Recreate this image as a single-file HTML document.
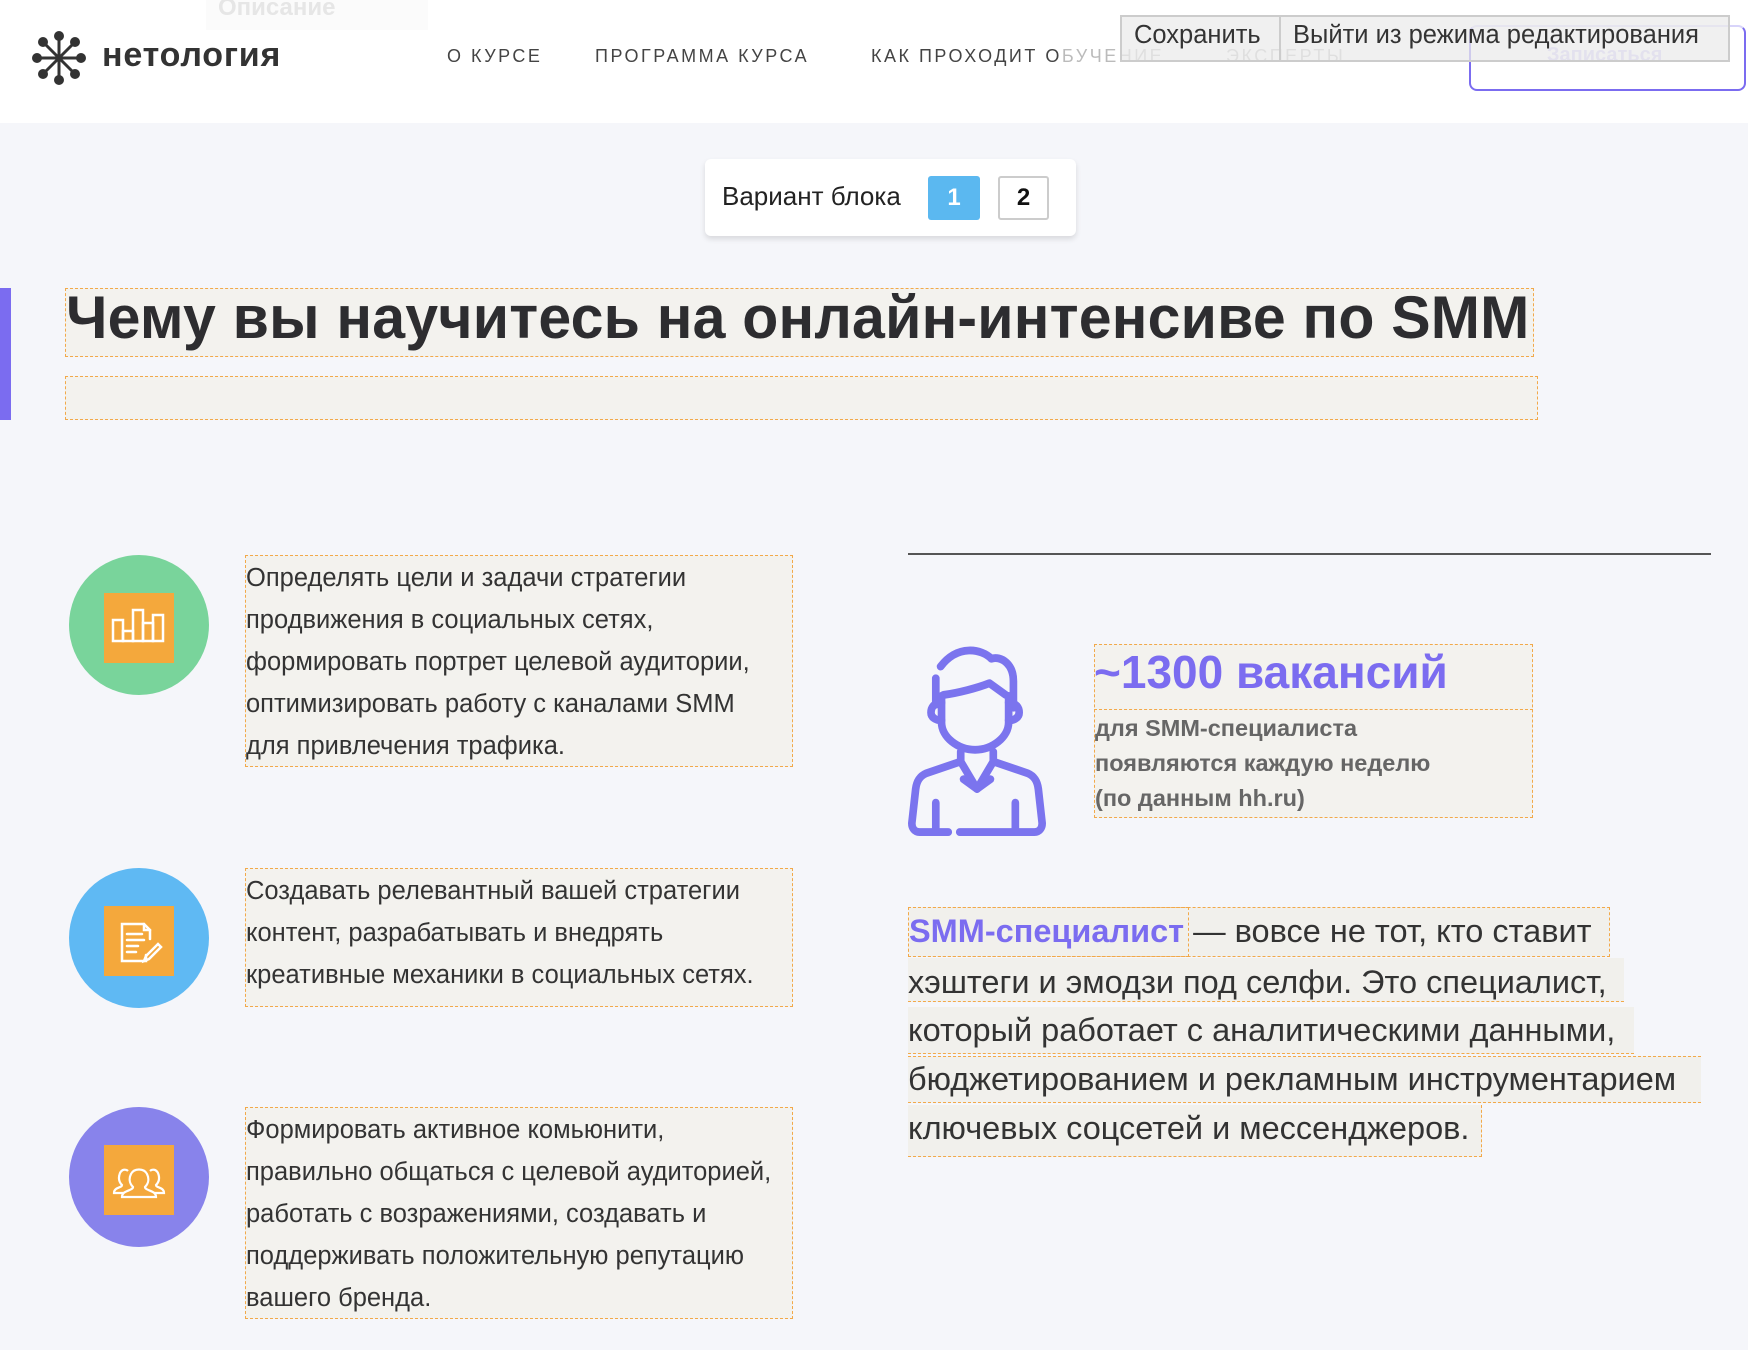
<!DOCTYPE html>
<html><head><meta charset="utf-8"><style>
*{margin:0;padding:0;box-sizing:border-box}
body{width:1748px;height:1350px;background:#f5f6fa;font-family:"Liberation Sans","Noto Sans CJK SC",sans-serif;position:relative;overflow:hidden;color:#333}
.abs{position:absolute}
.hdr{left:0;top:0;width:1748px;height:123px;background:#fff}
.nav{top:46px;font-size:18px;letter-spacing:2.5px;color:#444;white-space:nowrap}
.dot{border:1px dashed #f2a94a;background:#f3f2ee}
.tb{font-size:25.5px;line-height:42px;color:#333;padding:0 0 0 0;white-space:nowrap}
.circ{width:140px;height:140px;border-radius:50%;left:69px}
.sq{position:absolute;left:35px;top:38px;width:70px;height:70px;background:#f4a83c}
.pl{font-size:32.5px;line-height:49px;color:#333;white-space:nowrap}
</style></head><body>
<div class="abs hdr"></div>
<div class="abs" style="left:206px;top:0;width:222px;height:30px;background:#fbfbfb"></div>
<div class="abs" style="left:218px;top:-6px;font-size:24px;color:#e6e6e6;font-weight:bold">Описание</div>
<svg class="abs" style="left:31px;top:30px" width="56" height="56" viewBox="0 0 56 56">
<g stroke="#333" stroke-width="3"><line x1="28" y1="6" x2="28" y2="50"/><line x1="6" y1="28" x2="50" y2="28"/><line x1="12" y1="12" x2="44" y2="44"/><line x1="44" y1="12" x2="12" y2="44"/></g>
<g fill="#333"><circle cx="28" cy="6" r="5"/><circle cx="28" cy="50" r="5"/><circle cx="6" cy="28" r="5"/><circle cx="50" cy="28" r="5"/><circle cx="12" cy="12" r="5"/><circle cx="44" cy="44" r="5"/><circle cx="44" cy="12" r="5"/><circle cx="12" cy="44" r="5"/></g></svg>
<div class="abs" style="left:102px;top:36px;font-size:34px;color:#333;letter-spacing:0.8px;font-weight:bold;transform:scaleX(1.0);">нетология</div>
<div class="abs nav" style="left:447px">О КУРСЕ</div>
<div class="abs nav" style="left:595px">ПРОГРАММА КУРСА</div>
<div class="abs nav" style="left:871px">КАК ПРОХОДИТ О<span style="color:#bbb">БУЧЕНИЕ</span></div>
<div class="abs nav" style="left:1226px;color:#bbb">ЭКСПЕРТЫ</div>
<div class="abs" style="left:1469px;top:25px;width:277px;height:66px;border:2px solid #7b6cf0;border-top-color:#d8d4fa;border-radius:8px"></div>
<div class="abs" style="left:1547px;top:44px;font-size:20px;color:#c9c4f7;font-weight:bold">Записаться</div>
<div class="abs" style="left:1120px;top:15px;width:610px;height:47px;background:rgba(235,235,235,.75);border:2px solid #ccc"></div>
<div class="abs" style="left:1279px;top:15px;width:2px;height:47px;background:#ccc"></div>
<div class="abs" style="left:1134px;top:21px;font-size:25.5px;color:#333">Сохранить</div>
<div class="abs" style="left:1293px;top:21px;font-size:25.5px;color:#333">Выйти из режима редактирования</div>

<div class="abs" style="left:705px;top:159px;width:371px;height:77px;background:#fff;border-radius:6px;box-shadow:0 3px 6px rgba(0,0,0,.12)"></div>
<div class="abs" style="left:722px;top:181px;font-size:26px;color:#222">Вариант блока</div>
<div class="abs" style="left:928px;top:176px;width:52px;height:44px;background:#5bb8f0;border-radius:3px;color:#fff;font-size:24px;font-weight:bold;text-align:center;line-height:44px">1</div>
<div class="abs" style="left:998px;top:176px;width:51px;height:44px;background:#fff;border:2px solid #ccc;border-radius:3px;color:#111;font-size:24px;font-weight:bold;text-align:center;line-height:40px">2</div>

<div class="abs" style="left:0;top:288px;width:11px;height:132px;background:#7b6cf0"></div>
<div class="abs dot" style="left:65px;top:288px;width:1469px;height:69px"></div>
<div class="abs" style="left:66px;top:283px;font-size:60px;font-weight:bold;color:#2d2d30;white-space:nowrap;letter-spacing:0.2px;transform:scaleX(0.984);transform-origin:left">Чему вы научитесь на онлайн-интенсиве по SMM</div>
<div class="abs dot" style="left:65px;top:376px;width:1473px;height:44px"></div>

<div class="abs" style="left:908px;top:553px;width:803px;height:2px;background:#555"></div>

<div class="abs circ" style="top:555px;background:#79d49b"><div class="sq"><svg width="70" height="70" viewBox="0 0 70 70" fill="none" stroke="#fff" stroke-width="2.5"><rect x="9" y="27" width="10" height="21"/><rect x="19" y="38" width="10" height="10"/><rect x="29" y="17" width="10" height="31"/><rect x="39" y="30" width="10" height="18"/><rect x="49" y="22" width="10" height="26"/></svg></div></div>
<div class="abs circ" style="top:868px;background:#5fb9f3"><div class="sq"><svg width="70" height="70" viewBox="0 0 70 70" fill="none" stroke="#fff" stroke-width="2.5" stroke-linecap="round"><path d="M42 49V55H18V18H40L46 24V33"/><path d="M40 18V24H46"/><path d="M23 28H38M23 34H40M23 40H34M23 46H32"/><path d="M42 50L54 38L57 41L45 53L40 55Z"/></svg></div></div>
<div class="abs circ" style="top:1107px;background:#8883eb"><div class="sq"><svg width="70" height="70" viewBox="0 0 70 70" fill="none" stroke="#fff" stroke-width="2.2"><path d="M20 48H10C10 42 18 43 18 40C15 37 14 33 16 28C18 24 22 24 24 26"/><path d="M50 48H60C60 42 52 43 52 40C55 37 56 33 54 28C52 24 48 24 46 26"/><path d="M18 52C18 45 29 46 29 42C25 38 25 33 27 29C30 23 40 23 43 29C45 33 45 38 41 42C41 46 52 45 52 52Z"/></svg></div></div>

<div class="abs dot tb" style="left:245px;top:555px;width:548px;height:212px;padding-top:1px">Определять цели и задачи стратегии<br>продвижения в социальных сетях,<br>формировать портрет целевой аудитории,<br>оптимизировать работу с каналами SMM<br>для привлечения трафика.</div>
<div class="abs dot tb" style="left:245px;top:868px;width:548px;height:139px;padding-top:1px">Создавать релевантный вашей стратегии<br>контент, разрабатывать и внедрять<br>креативные механики в социальных сетях.</div>
<div class="abs dot tb" style="left:245px;top:1107px;width:548px;height:212px;padding-top:1px">Формировать активное комьюнити,<br>правильно общаться с целевой аудиторией,<br>работать с возражениями, создавать и<br>поддерживать положительную репутацию<br>вашего бренда.</div>

<svg class="abs" style="left:908px;top:644px" width="138" height="192" viewBox="8 10 144 196" preserveAspectRatio="none" fill="none" stroke="#7b74ee" stroke-width="8" stroke-linecap="round" stroke-linejoin="round">
<path d="M42 33C60 10 85 15 95 25C105 22 118 30 118 48V75"/>
<path d="M37 45V72"/>
<path d="M45 62C60 60 80 55 93 50L110 62"/>
<path d="M43 63V90C43 105 60 118 78 118C96 118 113 105 113 90V63"/>
<path d="M43 70C35 70 32 75 32 80C32 85 37 88 43 88M113 70C121 70 124 75 124 80C124 85 119 88 113 88"/>
<path d="M63 120V130L80 158L97 130V120"/>
<path d="M63 130L27 142C20 145 17 150 16 158L12 193C12 198 15 202 20 202H50M97 130L133 142C140 145 143 150 144 158L148 193C148 198 145 202 140 202H62"/>
<path d="M37 172V200M120 172V200"/>
<path d="M66 148L80 158L94 148"/>
</svg>

<div class="abs dot" style="left:1094px;top:644px;width:439px;height:174px"></div>
<div class="abs" style="left:1094px;top:709px;width:439px;height:0;border-top:1px dashed #f2a94a"></div>
<div class="abs" style="left:1094px;top:645px;font-size:46px;font-weight:bold;color:#7b6cf0;white-space:nowrap">~1300 вакансий</div>
<div class="abs" style="left:1095px;top:711px;font-size:23.5px;line-height:35px;font-weight:bold;color:#666;white-space:nowrap">для SMM-специалиста<br>появляются каждую неделю<br>(по данным hh.ru)</div>

<div class="abs" style="left:908px;top:907px;width:702px;height:50px;background:#f1f0ec;border:1px dashed #f2a94a"></div>
<div class="abs" style="left:908px;top:907px;width:281px;height:50px;border:1px dashed #f2a94a"></div>
<div class="abs pl" style="left:909px;top:907px"><b style="color:#7b6cf0;font-weight:bold">SMM-специалист</b> — вовсе не тот, кто ставит</div>
<div class="abs" style="left:908px;top:958px;width:716px;height:44px;background:#f1f0ec;border-bottom:1px dashed #f2a94a"></div>
<div class="abs pl" style="left:908px;top:958px">хэштеги и эмодзи под селфи. Это специалист,</div>
<div class="abs" style="left:908px;top:1007px;width:726px;height:47px;background:#f1f0ec;border-bottom:1px dashed #f2a94a"></div>
<div class="abs pl" style="left:908px;top:1006px">который работает с аналитическими данными,</div>
<div class="abs" style="left:908px;top:1056px;width:793px;height:47px;background:#f1f0ec;border-top:1px dashed #f2a94a;border-bottom:1px dashed #f2a94a"></div>
<div class="abs pl" style="left:908px;top:1055px">бюджетированием и рекламным инструментарием</div>
<div class="abs" style="left:908px;top:1105px;width:574px;height:52px;background:#f1f0ec;border-right:1px dashed #f2a94a;border-bottom:1px dashed #f2a94a"></div>
<div class="abs pl" style="left:908px;top:1104px">ключевых соцсетей и мессенджеров.</div>
</body></html>
